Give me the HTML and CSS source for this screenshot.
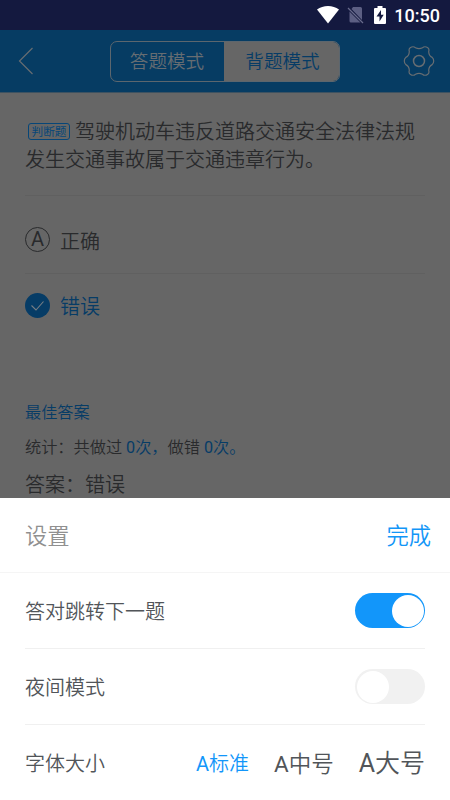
FILE: index.html
```html
<!DOCTYPE html>
<html lang="zh-CN">
<head>
<meta charset="utf-8">
<title>设置</title>
<link rel="stylesheet" href="styles.css">
</head>
<body>
<div class="status">
  <svg class="wifi" width="22" height="18" viewBox="0 0 22 18"><path d="M0 3.600C6-1.200 16-1.200 22 3.600L11 17.500Z" fill="#fff"/></svg>
  <svg class="sim" width="17" height="18" viewBox="0 0 17 18"><path d="M6 1h7.500q1.500 0 1.500 1.500V14L4.500 3ZM2.500 5.500L13.500 16.500H4q-1.500 0-1.500-1.500Z" fill="#5c5f83"/><path d="M1 2l15 15" stroke="#686b8c" stroke-width="1.300"/></svg>
  <svg class="battery" width="12" height="18" viewBox="0 0 12 18"><path d="M3.500 0h5v2H11q1 0 1 1v14q0 1-1 1H1q-1 0-1-1V3q0-1 1-1h2.500Z" fill="#fff"/><path d="M7 4L2.500 10.500H5.500V15.500L9.700 8.800H7Z" fill="#14193f"/></svg>
  <span class="clock">10:50</span>
</div>
<header class="bar">
  <svg class="back" width="16" height="28" viewBox="0 0 16 28"><path d="M14.500 1L1.500 14L14.500 27" fill="none" stroke="#676d72" stroke-width="1.200"/></svg>
  <div class="tabs"><span class="tab">答题模式</span><span class="tab selected">背题模式</span></div>
  <svg class="gear" width="32" height="32" viewBox="-16 -16 32 32" fill="none" stroke="#676d72" stroke-width="1.200"><path d="M-3.500-13.200Q0-11.400 3.500-13.200Q5.800-15.300 8.800-13.200Q10.500-12 9.700-9.600Q9.800-5.200 13.200-3.600Q14.700-2.200 14.700 0Q14.700 2.200 13.200 3.600Q9.800 5.200 9.700 9.600Q10.500 12 8.800 13.200Q5.800 15.300 3.500 13.200Q0 11.400-3.500 13.200Q-5.800 15.300-8.800 13.200Q-10.500 12-9.700 9.600Q-9.800 5.200-13.200 3.600Q-14.700 2.200-14.700 0Q-14.700-2.200-13.200-3.600Q-9.800-5.200-9.700-9.600Q-10.500-12-8.800-13.200Q-5.800-15.300-3.500-13.200Z"/><circle r="5.500" stroke-width="1.500"/></svg>
</header>
<main class="page">
  <div class="question"><span class="tag">判断题</span>驾驶机动车违反道路交通安全法律法规发生交通事故属于交通违章行为。</div>
  <div class="option first"><span class="letter">A</span><span class="label">正确</span></div>
  <div class="option chosen">
    <svg width="25" height="25" viewBox="0 0 25 25"><circle cx="12.500" cy="12.500" r="12.500" fill="#063c66"/><path d="M6.500 12.500L11 17L18.500 8.500" fill="none" stroke="#777e84" stroke-width="1.100"/></svg>
    <span class="label">错误</span>
  </div>
  <div class="best">最佳答案</div>
  <div class="stats">统计：共做过 <b><span class="latin">0</span>次，</b>做错 <b><span class="latin">0</span>次。</b></div>
  <div class="answer">答案：错误</div>
</main>
<section class="sheet">
  <div class="sheet-head"><span>设置</span><span class="done">完成</span></div>
  <div class="row"><span class="name">答对跳转下一题</span><span class="switch on"></span></div>
  <div class="row"><span class="name">夜间模式</span><span class="switch"></span></div>
  <div class="row last"><span class="name">字体大小</span><div class="sizes"><span class="small"><span class="latin">A</span>标准</span><span class="medium"><span class="latin">A</span>中号</span><span class="large"><span class="latin">A</span>大号</span></div></div>
</section>
</body>
</html>
```
FILE: styles.css
```css
* { box-sizing: border-box; }
body {
  margin: 0;
  width: 450px;
  height: 800px;
  overflow: hidden;
  display: flex;
  flex-direction: column;
  background: #666;
  font-family: Roboto, "Noto Sans CJK SC", sans-serif;
  font-weight: 350;
}
svg { display: block; flex: none; }
.latin { font-weight: 400; }
.status {
  height: 30px;
  flex: none;
  background: #14193f;
  display: flex;
  align-items: center;
  justify-content: flex-end;
  padding-right: 10px;
}
.sim { margin-left: 8px; }
.battery { margin-left: 10px; }
.clock {
  margin-left: 8px;
  color: #fff;
  font: 500 18px/30px Roboto, sans-serif;
  padding-top: 2px;
}
.bar {
  height: 63px;
  flex: none;
  background: #063c63;
  border-bottom: 1px solid #3d5261;
  display: flex;
  align-items: center;
  padding: 0 15.5px 0 18px;
}
.gear { margin-left: auto; }
.tabs {
  width: 230px;
  height: 41px;
  margin-left: 76px;
  display: flex;
  border: 1px solid #5c666e;
  border-radius: 7px;
  overflow: hidden;
}
.tab {
  flex: 0 0 113px;
  padding-right: 1px;
  text-align: center;
  font-size: 18.6px;
  line-height: 41px;
  color: #676d72;
}
.tab.selected { flex: 1; padding: 0 0 0 2px; background: #666; color: #063c66; }
.page {
  height: 405px;
  flex: none;
  padding: 25px 25px 0;
  background: #666;
  color: #292a2c;
}
.question {
  height: 77px;
  font-size: 20px;
  line-height: 28px;
}
.tag {
  display: inline-block;
  width: 42px;
  height: 17px;
  margin: 0 5px 0 3px;
  border: 1px solid #064678;
  border-radius: 3px;
  color: #064678;
  font-size: 11.7px;
  font-weight: 400;
  line-height: 17px;
  text-align: center;
  vertical-align: 3px;
}
.option {
  display: flex;
  align-items: center;
  gap: 10px;
  height: 62px;
  font-size: 20px;
  line-height: 30px;
}
.option.first {
  height: 79px;
  border-top: 1px solid #606060;
  border-bottom: 1px solid #606060;
  padding-top: 10px;
}
.label { padding-top: 4px; }
.letter {
  width: 25px;
  height: 25px;
  border: 1px solid #292a2c;
  border-radius: 50%;
  text-align: center;
  font-size: 20px;
  font-weight: 400;
  line-height: 23px;
}
.chosen, .best, .stats b { color: #063c66; }
.best {
  margin-top: 65px;
  font-size: 16.2px;
  line-height: 24px;
}
.stats {
  margin-top: 11px;
  font-size: 16.2px;
  line-height: 24px;
}
.stats b { font-weight: inherit; }
.answer {
  margin-top: 10px;
  font-size: 20px;
  line-height: 30px;
}
.sheet {
  flex: 1;
  background: #fff;
  color: #515559;
}
.sheet-head {
  height: 75px;
  padding: 2px 19px 0 25px;
  border-bottom: 1px solid #f5f5f5;
  display: flex;
  justify-content: space-between;
  align-items: center;
  font-size: 22.3px;
  line-height: 32px;
  color: #909090;
}
.done { color: #1296f7; }
.row {
  height: 76px;
  margin: 0 25px;
  border-bottom: 1px solid #f0f0f0;
  display: flex;
  align-items: center;
  justify-content: space-between;
  font-size: 20px;
  line-height: 30px;
}
.name, .sizes { padding-top: 2px; }
.row.last { border: 0; }
.switch {
  width: 70px;
  height: 35px;
  border-radius: 18px;
  background: #f1f1f1;
  padding: 1.5px;
  display: flex;
}
.switch::before {
  content: "";
  width: 32px;
  height: 32px;
  border-radius: 50%;
  background: #fff;
}
.switch.on { background: #1296fa; justify-content: flex-end; }
.sizes { display: flex; align-items: center; gap: 25px; }
.small { font-size: 20px; color: #1296fa; }
.medium { font-size: 22.5px; }
.large { font-size: 25px; }
```
